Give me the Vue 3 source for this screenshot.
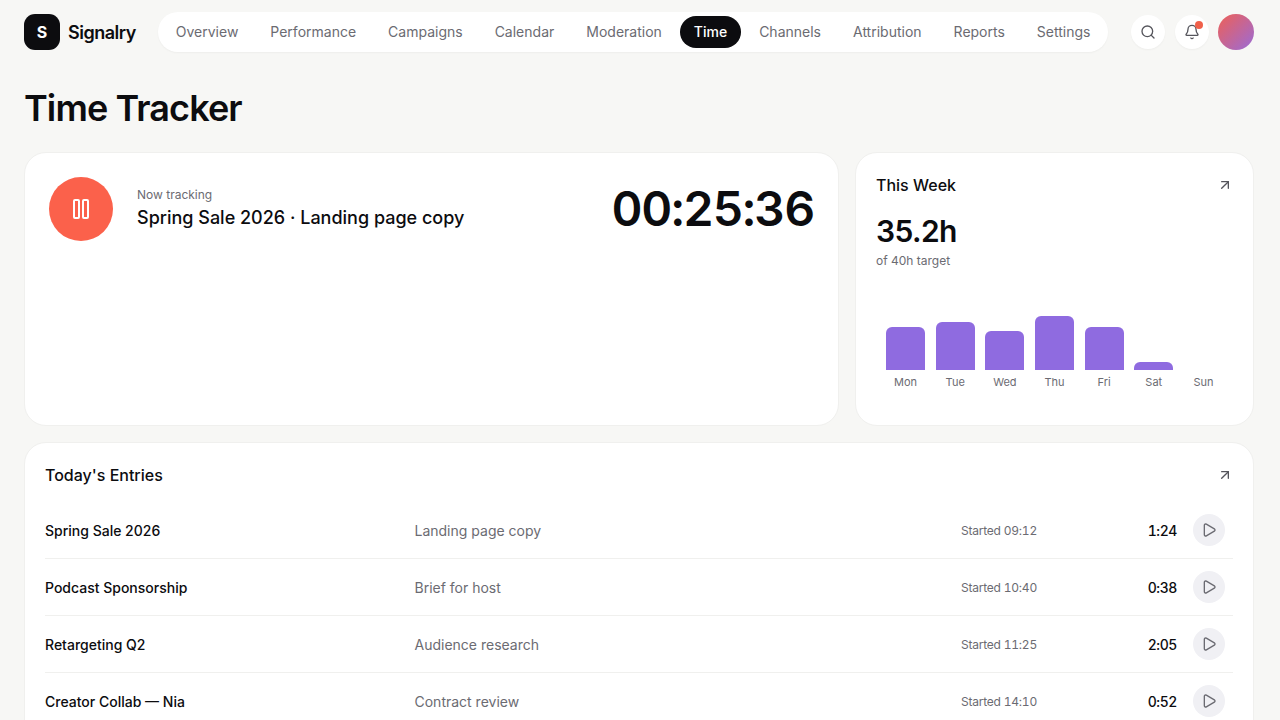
<script setup>
const links = ['Overview','Performance','Campaigns','Calendar','Moderation','Time','Channels','Attribution','Reports','Settings']
const bars = [{d:'Mon',h:43},{d:'Tue',h:48},{d:'Wed',h:39},{d:'Thu',h:54},{d:'Fri',h:43},{d:'Sat',h:8},{d:'Sun',h:0}]
const entries = [
  {n:'Spring Sale 2026',t:'Landing page copy',s:'Started 09:12',d:'1:24'},
  {n:'Podcast Sponsorship',t:'Brief for host',s:'Started 10:40',d:'0:38'},
  {n:'Retargeting Q2',t:'Audience research',s:'Started 11:25',d:'2:05'},
  {n:'Creator Collab — Nia',t:'Contract review',s:'Started 14:10',d:'0:52'},
]
</script>

<template>
  <div class="page">
    <header class="top">
      <div class="brand"><span class="mark">S</span><span class="name">Signalry</span></div>
      <nav class="nav">
        <a v-for="l in links" :key="l" class="link" :class="{on:l==='Time'}">{{ l }}</a>
      </nav>
      <div class="actions">
        <button class="round">
          <svg width="16" height="16" viewBox="0 0 24 24" fill="none" stroke="#55555c" stroke-width="2" stroke-linecap="round" stroke-linejoin="round"><circle cx="11" cy="11" r="8"/><path d="m21 21-4.34-4.34"/></svg>
        </button>
        <button class="round bell">
          <svg width="16" height="16" viewBox="0 0 24 24" fill="none" stroke="#55555c" stroke-width="2" stroke-linecap="round" stroke-linejoin="round"><path d="M10.268 21a2 2 0 0 0 3.464 0"/><path d="M3.262 15.326A1 1 0 0 0 4 17h16a1 1 0 0 0 .74-1.673C19.41 13.956 18 12.499 18 8A6 6 0 0 0 6 8c0 4.499-1.411 5.956-2.738 7.326"/></svg>
          <span class="dot"></span>
        </button>
        <span class="avatar"></span>
      </div>
    </header>

    <h1 class="title">Time Tracker</h1>

    <section class="grid">
      <div class="card tracker">
        <button class="pause">
          <svg width="24" height="24" viewBox="0 0 24 24" fill="none" stroke="#fff" stroke-width="2" stroke-linecap="round" stroke-linejoin="round"><rect x="5" y="3" width="5" height="18" rx="1"/><rect x="14" y="3" width="5" height="18" rx="1"/></svg>
        </button>
        <div class="info">
          <div class="label">Now tracking</div>
          <div class="task">Spring Sale 2026 · Landing page copy</div>
        </div>
        <div class="clock">00:25:36</div>
      </div>

      <div class="card week">
        <div class="head">
          <h2>This Week</h2>
          <svg width="16" height="16" viewBox="0 0 24 24" fill="none" stroke="#55555c" stroke-width="2" stroke-linecap="round" stroke-linejoin="round"><path d="M7 7h10v10"/><path d="M7 17 17 7"/></svg>
        </div>
        <div class="total">35.2h</div>
        <div class="target">of 40h target</div>
        <div class="chart">
          <div v-for="b in bars" :key="b.d" class="col">
            <div class="bar" :style="{height:b.h+'px'}"></div>
            <span class="day">{{ b.d }}</span>
          </div>
        </div>
      </div>
    </section>

    <section class="card list">
      <div class="head">
        <h2>Today's Entries</h2>
        <svg width="16" height="16" viewBox="0 0 24 24" fill="none" stroke="#55555c" stroke-width="2" stroke-linecap="round" stroke-linejoin="round"><path d="M7 7h10v10"/><path d="M7 17 17 7"/></svg>
      </div>
      <div v-for="e in entries" :key="e.n" class="row">
        <span class="ename">{{ e.n }}</span>
        <span class="etask">{{ e.t }}</span>
        <span class="estart">{{ e.s }}</span>
        <span class="edur">{{ e.d }}</span>
        <button class="play">
          <svg width="16" height="16" viewBox="0 0 24 24" fill="none" stroke="#6b6b72" stroke-width="2" stroke-linecap="round" stroke-linejoin="round"><path d="M5 5a2 2 0 0 1 3.008-1.728l11.997 6.998a2 2 0 0 1 .003 3.458l-12 7A2 2 0 0 1 5 19z"/></svg>
        </button>
      </div>
    </section>
  </div>
</template>

<style>
html, body { margin: 0; background: #f7f7f5; overflow: hidden; }
</style>

<style scoped>
.page {
  height: 720px;
  overflow: hidden;
  box-sizing: border-box;
  padding: 12px 26px 0 24px;
  background: #f7f7f5;
  font-family: Inter, "Liberation Sans", sans-serif;
  color: #0c0c0f;
}
.top { display: flex; align-items: center; gap: 22px; height: 40px; }
.brand { display: flex; align-items: center; gap: 8px; }
.mark {
  width: 36px; height: 36px; border-radius: 11px; background: #0c0c0f; color: #fff;
  display: flex; align-items: center; justify-content: center; font-weight: 700; font-size: 16px;
}
.name { font-size: 18px; font-weight: 600; letter-spacing: -0.5px; }
.nav {
  display: flex; gap: 4px; padding: 4px; background: #fff; border-radius: 20px;
  box-shadow: 0 1px 2px rgba(0,0,0,.04);
}
.link { height: 32px; line-height: 32px; padding: 0 14px; border-radius: 16px; font-size: 14px; color: #6b6b72; white-space: nowrap; }
.link.on { background: #0c0c0f; color: #fff; font-weight: 500; }
.actions { display: flex; align-items: center; gap: 10px; margin-left: auto; }
.round {
  position: relative; width: 34px; height: 34px; padding: 0; border: 0; border-radius: 50%; background: #fff;
  display: flex; align-items: center; justify-content: center; box-shadow: 0 1px 2px rgba(0,0,0,.04);
}
.dot { position: absolute; top: 6px; right: 6px; width: 8px; height: 8px; border-radius: 50%; background: #f0604a; }
.avatar { width: 36px; height: 36px; border-radius: 50%; background: linear-gradient(135deg, #ef6055, #9a6bd8); margin-left: -1px; }
.title { margin: 34px 0 0; font-size: 36px; line-height: 44px; font-weight: 600; letter-spacing: -0.9px; }
.grid { display: grid; grid-template-columns: 1fr 399px; gap: 16px; margin-top: 22px; }
.card { background: #fff; border: 1px solid #f0f0ee; border-radius: 22px; box-sizing: border-box; }
.tracker { height: 274px; padding: 24px; display: flex; align-items: flex-start; gap: 24px; }
.pause {
  width: 64px; height: 64px; padding: 0; border: 0; border-radius: 50%; background: #fb614b; flex: none;
  display: flex; align-items: center; justify-content: center;
}
.info { padding-top: 10px; flex: 1; }
.label { font-size: 12px; line-height: 16px; color: #6b6b72; }
.task { font-size: 18px; line-height: 28px; margin-top: 1px; font-weight: 500; }
.clock { font-size: 48px; line-height: 64px; font-weight: 600; letter-spacing: -1.2px; font-variant-numeric: tabular-nums; }
.week { height: 274px; padding: 20px; }
.head { display: flex; align-items: center; justify-content: space-between; }
.head h2 { margin: 0; font-size: 16px; line-height: 24px; font-weight: 500; }
.total { font-size: 30px; line-height: 36px; font-weight: 600; margin-top: 16px; letter-spacing: -0.6px; }
.target { font-size: 12px; line-height: 16px; color: #6b6b72; margin-top: 4px; }
.chart { display: flex; gap: 10.5px; margin-top: 43px; padding: 0 10px; height: 76px; }
.col { flex: 1; display: flex; flex-direction: column; justify-content: flex-end; align-items: stretch; gap: 6px; height: 76px; text-align: center; }
.bar { background: #8f6be0; border-radius: 6px 6px 0 0; }
.day { font-size: 11px; line-height: 12px; color: #6b6b72; }
.list { margin-top: 16px; padding: 20px; height: 320px; }
.list .head { margin-bottom: 15px; }
.row {
  display: grid; grid-template-columns: 369.5px 546.5px 1fr auto 32px; align-items: center;
  height: 57px; box-sizing: border-box; border-bottom: 1px solid #f0f0ee; padding-right: 8px;
}
.ename { font-size: 14px; font-weight: 500; }
.etask { font-size: 14px; color: #6b6b72; }
.estart { font-size: 12px; color: #6b6b72; font-variant-numeric: tabular-nums; letter-spacing: -0.22px; }
.edur { font-size: 14px; font-weight: 500; margin-right: 16px; font-variant-numeric: tabular-nums; letter-spacing: -0.4px; }
.play {
  width: 32px; height: 32px; padding: 0; border: 0; border-radius: 50%; background: #f0f0f4;
  display: flex; align-items: center; justify-content: center;
}
</style>
